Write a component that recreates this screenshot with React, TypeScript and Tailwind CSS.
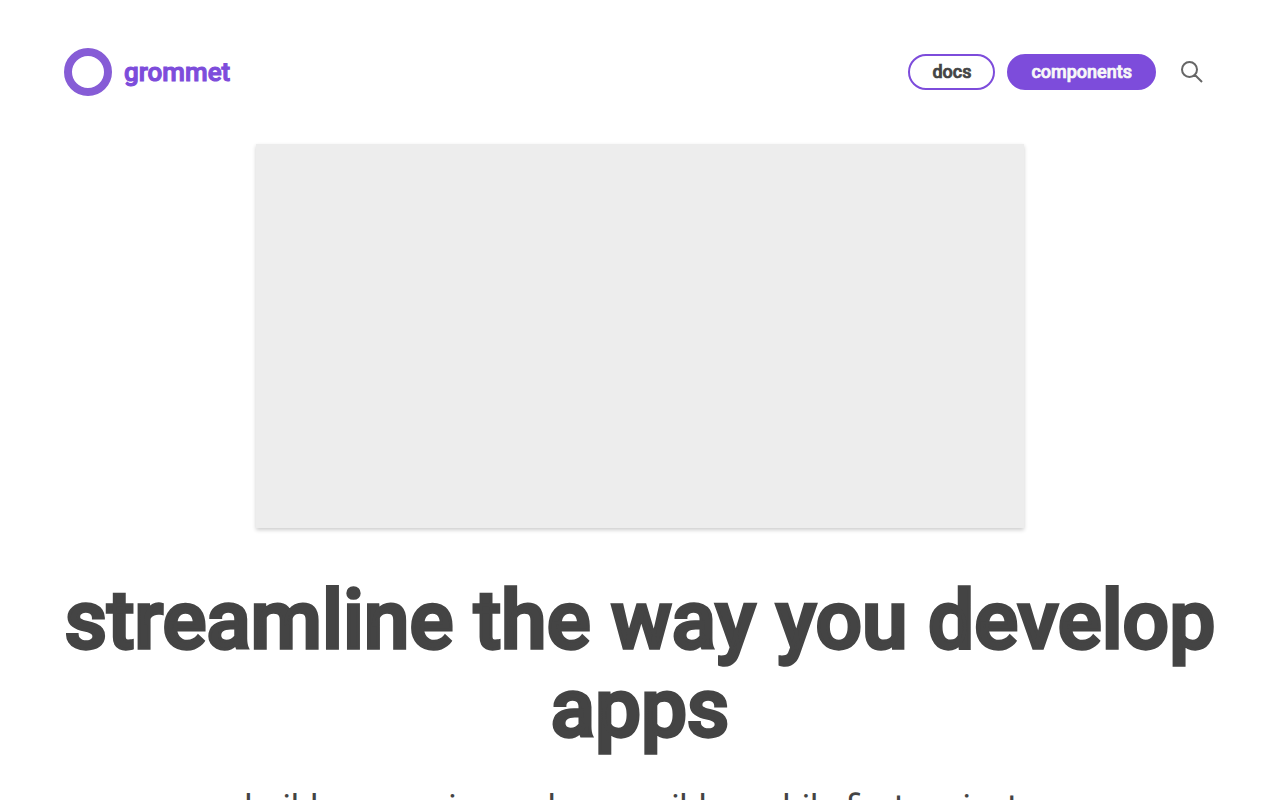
const navButton =
  'cursor-pointer rounded-[18px] border-2 border-[#7d4cdb] px-[22px] py-1 text-lg leading-6 font-medium [-webkit-text-stroke:0.04em]'

export default function App() {
  return (
    <div className="min-h-screen bg-white font-['Roboto',sans-serif] text-[#444444]">
      <div className="px-12 py-12 sm:px-16">
        <header className="flex items-center justify-between">
          <a href="#" className="flex items-center gap-3">
            <svg viewBox="0 0 48 48" className="size-12" aria-hidden>
              <circle cx="24" cy="24" r="20" fill="none" stroke="#865cd6" strokeWidth="8" />
            </svg>
            <span className="text-[26px] leading-8 font-medium text-[#7d4cdb] [-webkit-text-stroke:0.04em]">
              grommet
            </span>
          </a>

          <nav className="flex items-center gap-3">
            <button type="button" className={navButton}>
              docs
            </button>
            <button type="button" className={`${navButton} bg-[#7d4cdb] text-[#f8f8f8]`}>
              components
            </button>
            <button type="button" aria-label="search" className="cursor-pointer p-3">
              <svg viewBox="0 0 24 24" className="size-6" fill="none" stroke="#666666" strokeWidth="2" aria-hidden>
                <path d="m15 15 7 7-7-7zm-5.5 2a7.5 7.5 0 1 0 0-15 7.5 7.5 0 0 0 0 15z" />
              </svg>
            </button>
          </nav>
        </header>

        <main className="mt-12 flex flex-col items-center text-center">
          <div className="h-96 w-full max-w-3xl bg-[#ededed] shadow-[0px_2px_4px_rgba(0,0,0,0.2)]" />
          <h1 className="mt-12 text-[82px] leading-[88px] font-medium [-webkit-text-stroke:0.04em]">
            streamline the way you develop apps
          </h1>
          <p className="mt-[34px] max-w-[816px] text-[34px] leading-10">
            build responsive and accessible mobile-first projects for the web with an easy to use component library
          </p>
        </main>
      </div>
    </div>
  )
}
